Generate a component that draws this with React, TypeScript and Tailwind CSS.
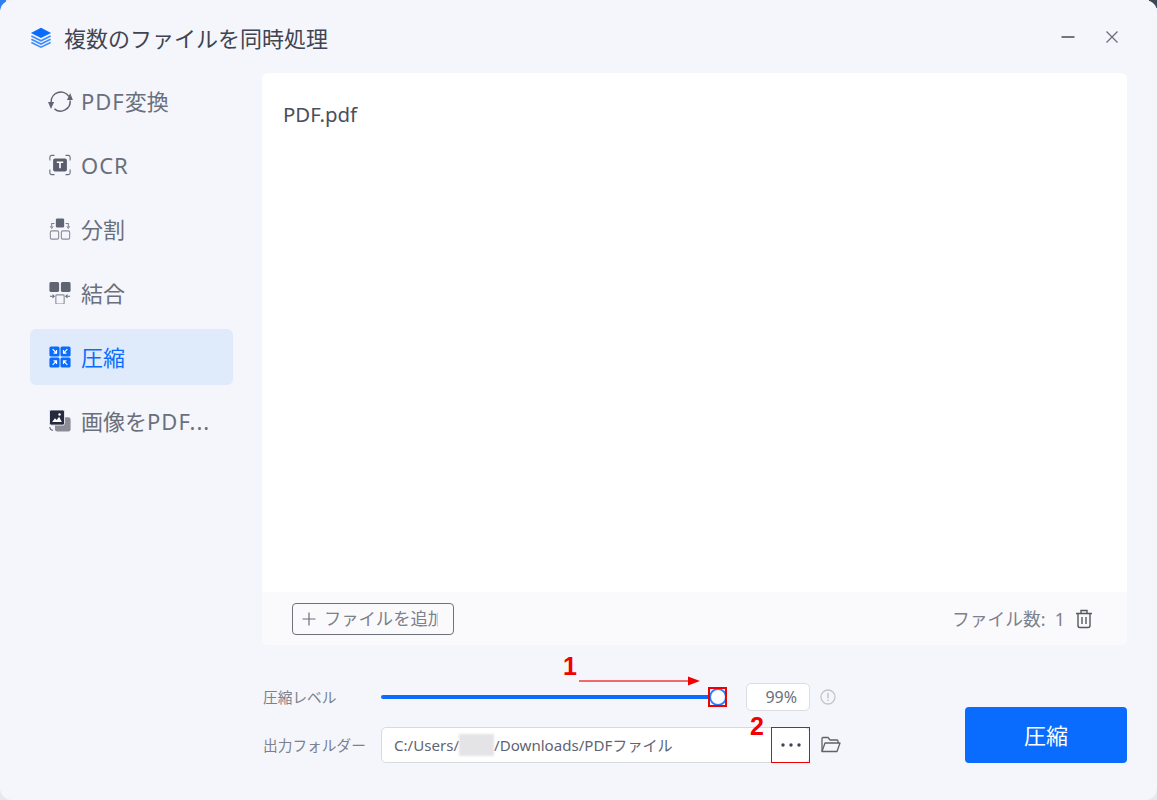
import React from "react";

const font = { fontFamily: '"Noto Sans", "Noto Sans CJK JP", sans-serif' };

function IconStack() {
  return (
    <svg width="24" height="24" viewBox="0 0 24 24" fill="none">
      <path d="M12 2 L23 7.5 L12 13 L1 7.5 Z" fill="#0a6cff" />
      <path d="M1.5 11 L12 16.2 L22.5 11" stroke="#3d8bff" strokeWidth="1.8" />
      <path d="M1.5 14.5 L12 19.7 L22.5 14.5" stroke="#3d8bff" strokeWidth="1.8" />
      <path d="M1.5 18 L12 23 L22.5 18" stroke="#3d8bff" strokeWidth="1.6" />
    </svg>
  );
}
function IconConvert() {
  return (
    <svg width="24" height="24" viewBox="0 0 24 24" fill="none" stroke="#5f6472" strokeWidth="1.6" className="overflow-visible">
      <path d="M2.4 13 A10.4 10.4 0 0 1 21.5 7" />
      <path d="M23 11.5 A10.4 10.4 0 0 1 6 20.5" />
      <path d="M19.6 10.9 L26 10.9 L23 3.3 Z" fill="#5f6472" stroke="none" />
      <path d="M-1 13 L5.6 13 L2.2 20.7 Z" fill="#5f6472" stroke="none" />
    </svg>
  );
}
function IconOcr() {
  return (
    <svg width="24" height="24" viewBox="0 0 24 24" fill="none">
      <path d="M6 1.5 H3 Q1 1.5 1 3.5 V7 M18 1.5 H21 Q23 1.5 23 3.5 V7 M6 22.5 H3 Q1 22.5 1 20.5 V17 M18 22.5 H21 Q23 22.5 23 20.5 V17" stroke="#6a6f7c" strokeWidth="1.2" />
      <rect x="4.5" y="5" width="15" height="14" rx="2" fill="#5a5e6c" />
      <path d="M8.5 9 H15.5 M12 9 V15.5" stroke="#fff" strokeWidth="1.8" />
    </svg>
  );
}
function IconSplit() {
  return (
    <svg width="24" height="24" viewBox="0 0 24 24" fill="none">
      <rect x="7.5" y="0.5" width="9" height="10" rx="1.5" fill="#5f6472" />
      <rect x="1.5" y="14" width="9" height="9" rx="1.5" stroke="#8a8e9a" strokeWidth="1.2" />
      <rect x="13.5" y="14" width="9" height="9" rx="1.5" stroke="#8a8e9a" strokeWidth="1.2" />
      <path d="M6 6 H3 V10 M18 6 H21 V10" stroke="#7a7e8a" strokeWidth="1.1" />
      <path d="M1.5 9 L3 11.5 L4.5 9 M19.5 9 L21 11.5 L22.5 9" stroke="#7a7e8a" strokeWidth="1" />
    </svg>
  );
}
function IconMerge() {
  return (
    <svg width="24" height="24" viewBox="0 0 24 24" fill="none">
      <rect x="0.5" y="0" width="10.5" height="11" rx="2" fill="#5f6472" />
      <rect x="13" y="0" width="10.5" height="11" rx="2" fill="#5f6472" />
      <rect x="7.5" y="14" width="9" height="10" rx="1" stroke="#8a8e9a" strokeWidth="1.2" />
      <path d="M1 15.5 H5.5 M3.8 13.8 L5.8 15.5 L3.8 17.2 M23 15.5 H18.5 M20.2 13.8 L18.2 15.5 L20.2 17.2" stroke="#6a6e7a" strokeWidth="1.1" />
    </svg>
  );
}
function IconCompress() {
  return (
    <svg width="24" height="24" viewBox="0 0 24 24" fill="none">
      <rect x="0.5" y="0.5" width="11" height="11" rx="1.8" fill="#0a6cff" />
      <rect x="12.5" y="0.5" width="11" height="11" rx="1.8" fill="#0a6cff" />
      <rect x="0.5" y="12.5" width="11" height="11" rx="1.8" fill="#0a6cff" />
      <rect x="12.5" y="12.5" width="11" height="11" rx="1.8" fill="#0a6cff" />
      <g stroke="#ffffff" strokeWidth="1.3">
        <path d="M4 3.5 L8 7.5 M8.2 4.5 V7.8 H5" />
        <path d="M20 3.5 L16 7.5 M15.8 4.5 V7.8 H19" />
        <path d="M4 20.5 L8 16.5 M8.2 19.5 V16.2 H5" />
        <path d="M20 20.5 L16 16.5 M15.8 19.5 V16.2 H19" />
      </g>
    </svg>
  );
}
function IconImage() {
  return (
    <svg width="24" height="24" viewBox="0 0 24 24" fill="none">
      <rect x="6.5" y="8" width="17" height="15.5" rx="2.5" fill="#8a8c98" />
      <rect x="0.5" y="0" width="16.5" height="16.5" rx="2" fill="#252a3e" stroke="#f4f6fb" strokeWidth="1" />
      <path d="M3.5 13 L6.5 9 L8.5 11 L11 7.5 L14 13 Z" fill="#fff" />
      <circle cx="11.5" cy="5" r="1.3" fill="#fff" />
      <path d="M1 18.5 Q1 22 4.5 22" stroke="#5f6472" strokeWidth="1.2" />
    </svg>
  );
}

const Lat = ({ children }: { children: React.ReactNode }) => <span className="tracking-[1px]">{children}</span>;

const items = [
  { key: "a", label: <><Lat>PDF</Lat>変換</>, icon: <IconConvert /> },
  { key: "b", label: <Lat>OCR</Lat>, icon: <IconOcr /> },
  { key: "c", label: <>分割</>, icon: <IconSplit /> },
  { key: "d", label: <>結合</>, icon: <IconMerge /> },
  { key: "e", label: <>圧縮</>, icon: <IconCompress />, active: true },
  { key: "f", label: <>画像を<Lat>PDF...</Lat></>, icon: <IconImage /> },
];

export default function App() {
  return (
    <div style={font} className="relative w-[1157px] h-[800px] overflow-hidden bg-[#e6e8ee]">
      <div className="absolute left-0 top-0 w-[6px] h-[12px] bg-[#2f7ff0]" />
      <div className="absolute right-0 top-0 w-[8px] h-[8px] bg-[#3c4658]" />
      <div className="relative flex flex-col w-[1157px] h-[800px] rounded-[12px] bg-[#f4f6fb]">
        <div className="flex items-center h-[73px] pl-[30px] pr-[38px] shrink-0">
          <div className="w-[22px] h-[22px] flex items-center justify-center mr-[12px]"><IconStack /></div>
          <span className="mt-[2px] text-[22px] leading-[28px] text-[#3f4452]">複数のファイルを同時処理</span>
          <div className="ml-auto flex items-center gap-[30px]">
            <svg width="14" height="14" viewBox="0 0 14 14"><path d="M0.5 7 H13.5" stroke="#3b3f4a" strokeWidth="1.4" /></svg>
            <svg width="14" height="14" viewBox="0 0 14 14"><path d="M1.5 1.5 L12.5 12.5 M12.5 1.5 L1.5 12.5" stroke="#6a6f7c" strokeWidth="1.3" /></svg>
          </div>
        </div>

        <div className="flex flex-1 min-h-0">
          <div className="w-[262px] shrink-0 pl-[30px]">
            <div className="flex flex-col gap-[8px] w-[203px]">
              {items.map((it) => (
                <div
                  key={it.key}
                  className={`flex items-center h-[56px] rounded-[6px] pl-[19px] ${it.active ? "bg-[#dfeafa] text-[#0a6cff]" : "text-[#6a6f7c]"}`}
                >
                  <div className="w-[22px] h-[22px] mr-[10px] flex items-center justify-center shrink-0">
                    <div className="scale-[0.92]">{it.icon}</div>
                  </div>
                  <span className="whitespace-nowrap text-[22px] leading-[28px]">{it.label}</span>
                </div>
              ))}
            </div>
          </div>

          <div className="flex flex-col w-[865px]">
            <div className="flex flex-col h-[572px] rounded-[6px] bg-white overflow-hidden">
              <div className="flex-1 pl-[21px] pt-[27px] text-[20.4px] leading-[28px] text-[#4a4f5c]">PDF.pdf</div>
              <div className="flex items-center h-[53px] bg-[#fafafc] pl-[30px] pr-[34px]">
                <div className="flex items-center w-[162px] h-[32px] rounded-[4px] border-[1.5px] border-[#6f7278] pl-[9px] overflow-hidden">
                  <svg width="14" height="14" viewBox="0 0 14 14" className="shrink-0 mr-[8px]"><path d="M7 0.5 V13.5 M0.5 7 H13.5" stroke="#6a6f7c" strokeWidth="1.2" /></svg>
                  <div className="w-[114px] overflow-hidden"><span className="block w-[130px] whitespace-nowrap text-[17.3px] leading-[24px] text-[#7d818c]">ファイルを追加</span></div>
                </div>
                <span className="ml-auto text-[17.8px] leading-[24px] text-[#7d818c]">ファイル数:&nbsp; 1</span>
                <svg width="18" height="20" viewBox="0 0 18 20" fill="none" stroke="#55585f" strokeWidth="1.4" className="ml-[10px]">
                  <path d="M1 4.5 H17 M6 4 V1.5 H12 V4 M3 4.5 V16.5 Q3 18.5 5 18.5 H13 Q15 18.5 15 16.5 V4.5 M7 8 V15 M11 8 V15" />
                </svg>
              </div>
            </div>

            <div className="flex flex-1 items-start">
              <div className="flex flex-col pt-[33px]">
                <div className="flex items-center h-[38px]">
                  <span className="w-[119px] pl-[1px] text-[14.7px] leading-[20px] text-[#7d818c]">圧縮レベル</span>
                  <div className="relative flex items-center w-[347px] h-[20px]">
                    <div className="h-[4px] w-[332px] rounded-full bg-[#0a6cff]" />
                    <div className="absolute left-[328px] top-[1px] w-[18px] h-[18px] rounded-full border-[2px] border-[#2b7dff] bg-white" />
                  </div>
                  <div className="ml-[18px] w-[64px] h-[28px] rounded-[5px] border border-[#dcdde2] bg-white text-right pr-[12px] text-[16px] leading-[26px] text-[#6a6f7c]">99%</div>
                  <svg width="16" height="16" viewBox="0 0 16 16" fill="none" className="ml-[10px]">
                    <circle cx="8" cy="8" r="7" stroke="#c3c5cb" strokeWidth="1.3" />
                    <path d="M8 3.8 V9.3 M8 10.6 V12" stroke="#c3c5cb" strokeWidth="1.5" />
                  </svg>
                </div>
                <div className="flex items-center h-[38px] mt-[10px]">
                  <span className="w-[119px] pl-[1px] text-[14.7px] leading-[20px] text-[#7d818c]">出力フォルダー</span>
                  <div className="flex items-center w-[429px] h-[36px] rounded-[5px] border border-[#d9dade] bg-white pl-[12px]">
                    <span className="text-[15.1px] leading-[22px] text-[#5f6472]">C:/Users/</span>
                    <div className="w-[35px] h-[22px] bg-[#e4e4e6] blur-[1px]" />
                    <span className="text-[15.1px] leading-[22px] text-[#5f6472]">/Downloads/PDFファイル</span>
                    <svg width="20" height="4" viewBox="0 0 20 4" className="ml-auto mr-[8px]" fill="#3f4452">
                      <circle cx="2" cy="2" r="1.7" /><circle cx="10" cy="2" r="1.7" /><circle cx="18" cy="2" r="1.7" />
                    </svg>
                  </div>
                  <svg width="20" height="18" viewBox="0 0 20 18" fill="none" stroke="#5f6268" strokeWidth="1.3" className="ml-[11px]">
                    <path d="M1 15.5 V2.5 Q1 1.5 2 1.5 H7 L9 4 H16 Q17 4 17 5 V7" />
                    <path d="M1 15.5 L4 7 H19 L16 15.5 Z" strokeLinejoin="round" />
                  </svg>
                </div>
              </div>
              <div className="ml-auto mt-[62px] flex items-center justify-center w-[162px] h-[56px] rounded-[4px] bg-[#0a6cff] text-[22px] leading-[28px] text-white">圧縮</div>
            </div>
          </div>
        </div>
      </div>

      {/* annotations */}
      <span style={{ fontFamily: '"Liberation Sans", sans-serif' }} className="absolute left-[563px] top-[652px] text-[25px] leading-[28px] font-bold text-[#f00000]">1</span>
      <span style={{ fontFamily: '"Liberation Sans", sans-serif' }} className="absolute left-[750px] top-[712px] text-[25px] leading-[28px] font-bold text-[#f00000]">2</span>
      <svg width="124" height="12" viewBox="0 0 124 12" className="absolute left-[578px] top-[675px]">
        <path d="M1 6 H112" stroke="#f03a3a" strokeWidth="1.4" />
        <path d="M110 1.5 L122 6 L110 10.5 Z" fill="#f00000" />
      </svg>
      <div className="absolute left-[708px] top-[687px] w-[19px] h-[20px] border-2 border-[#f00000]" />
      <div className="absolute left-[771px] top-[727px] w-[39px] h-[36px] border-[1.5px] border-[#f00000]" />
    </div>
  );
}
